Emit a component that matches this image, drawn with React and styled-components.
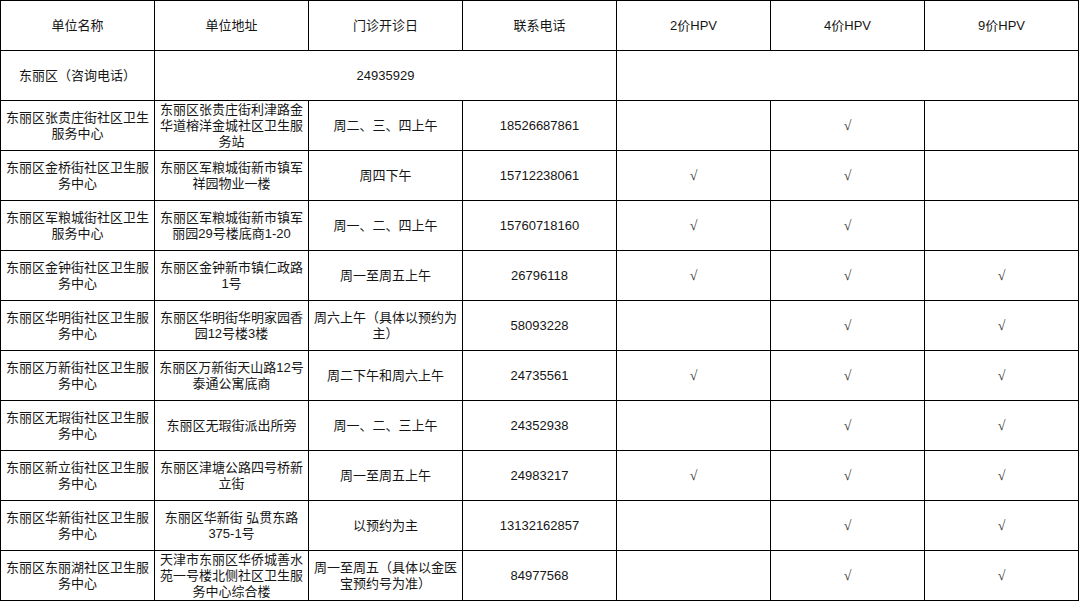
import React from 'react';
import styled, { createGlobalStyle } from 'styled-components';

const GlobalStyle = createGlobalStyle`
  html, body {
    margin: 0;
    padding: 0;
    background: #fff;
  }
  body {
    font-family: "Liberation Sans", Arial, "Noto Sans CJK SC", sans-serif;
    color: #161616;
  }
`;

const Sheet = styled.table`
  width: 1078px;
  table-layout: fixed;
  border-collapse: collapse;
  font-size: 13px;
  line-height: 16px;
`;

const Col = styled.col`
  width: 154px;
`;

const Row = styled.tr`
  height: 50px;
`;

const HeadCell = styled.th`
  border: 1px solid #000;
  font-weight: normal;
  text-align: center;
  vertical-align: middle;
  padding: 0 2px;
`;

const Cell = styled.td`
  border: 1px solid #000;
  text-align: center;
  vertical-align: middle;
  padding: 0 2px;
  white-space: pre-line;
  word-break: break-all;
`;

const Check = styled.span`
  font-family: "Liberation Serif", "DejaVu Serif", serif;
  font-size: 14px;
  color: #333;
`;

const headers = ['单位名称', '单位地址', '门诊开诊日', '联系电话', '2价HPV', '4价HPV', '9价HPV'];

const clinics = [
  {
    name: '东丽区张贵庄街社区卫生\n服务中心',
    address: '东丽区张贵庄街利津路金\n华道榕洋金城社区卫生服\n务站',
    days: '周二、三、四上午',
    phone: '18526687861',
    hpv: [false, true, false],
  },
  {
    name: '东丽区金桥街社区卫生服\n务中心',
    address: '东丽区军粮城街新市镇军\n祥园物业一楼',
    days: '周四下午',
    phone: '15712238061',
    hpv: [true, true, false],
  },
  {
    name: '东丽区军粮城街社区卫生\n服务中心',
    address: '东丽区军粮城街新市镇军\n丽园29号楼底商1-20',
    days: '周一、二、四上午',
    phone: '15760718160',
    hpv: [true, true, false],
  },
  {
    name: '东丽区金钟街社区卫生服\n务中心',
    address: '东丽区金钟新市镇仁政路\n1号',
    days: '周一至周五上午',
    phone: '26796118',
    hpv: [true, true, true],
  },
  {
    name: '东丽区华明街社区卫生服\n务中心',
    address: '东丽区华明街华明家园香\n园12号楼3楼',
    days: '周六上午（具体以预约为\n主）',
    phone: '58093228',
    hpv: [false, true, true],
  },
  {
    name: '东丽区万新街社区卫生服\n务中心',
    address: '东丽区万新街天山路12号\n泰通公寓底商',
    days: '周二下午和周六上午',
    phone: '24735561',
    hpv: [true, true, true],
  },
  {
    name: '东丽区无瑕街社区卫生服\n务中心',
    address: '东丽区无瑕街派出所旁',
    days: '周一、二、三上午',
    phone: '24352938',
    hpv: [false, true, true],
  },
  {
    name: '东丽区新立街社区卫生服\n务中心',
    address: '东丽区津塘公路四号桥新\n立街',
    days: '周一至周五上午',
    phone: '24983217',
    hpv: [true, true, true],
  },
  {
    name: '东丽区华新街社区卫生服\n务中心',
    address: '东丽区华新街 弘贯东路\n375-1号',
    days: '以预约为主',
    phone: '13132162857',
    hpv: [false, true, true],
  },
  {
    name: '东丽区东丽湖社区卫生服\n务中心',
    address: '天津市东丽区华侨城善水\n苑一号楼北侧社区卫生服\n务中心综合楼',
    days: '周一至周五（具体以金医\n宝预约号为准）',
    phone: '84977568',
    hpv: [false, true, true],
  },
];

const App = () => (
  <>
    <GlobalStyle />
    <Sheet>
      <colgroup>
        {headers.map(h => (
          <Col key={h} />
        ))}
      </colgroup>
      <thead>
        <Row>
          {headers.map(h => (
            <HeadCell key={h}>{h}</HeadCell>
          ))}
        </Row>
      </thead>
      <tbody>
        <Row>
          <Cell>东丽区（咨询电话）</Cell>
          <Cell colSpan={3}>24935929</Cell>
          <Cell colSpan={3} />
        </Row>
        {clinics.map(c => (
          <Row key={c.phone}>
            <Cell>{c.name}</Cell>
            <Cell>{c.address}</Cell>
            <Cell>{c.days}</Cell>
            <Cell>{c.phone}</Cell>
            {c.hpv.map((has, i) => (
              <Cell key={i}>{has && <Check>√</Check>}</Cell>
            ))}
          </Row>
        ))}
      </tbody>
    </Sheet>
  </>
);

export default App;
